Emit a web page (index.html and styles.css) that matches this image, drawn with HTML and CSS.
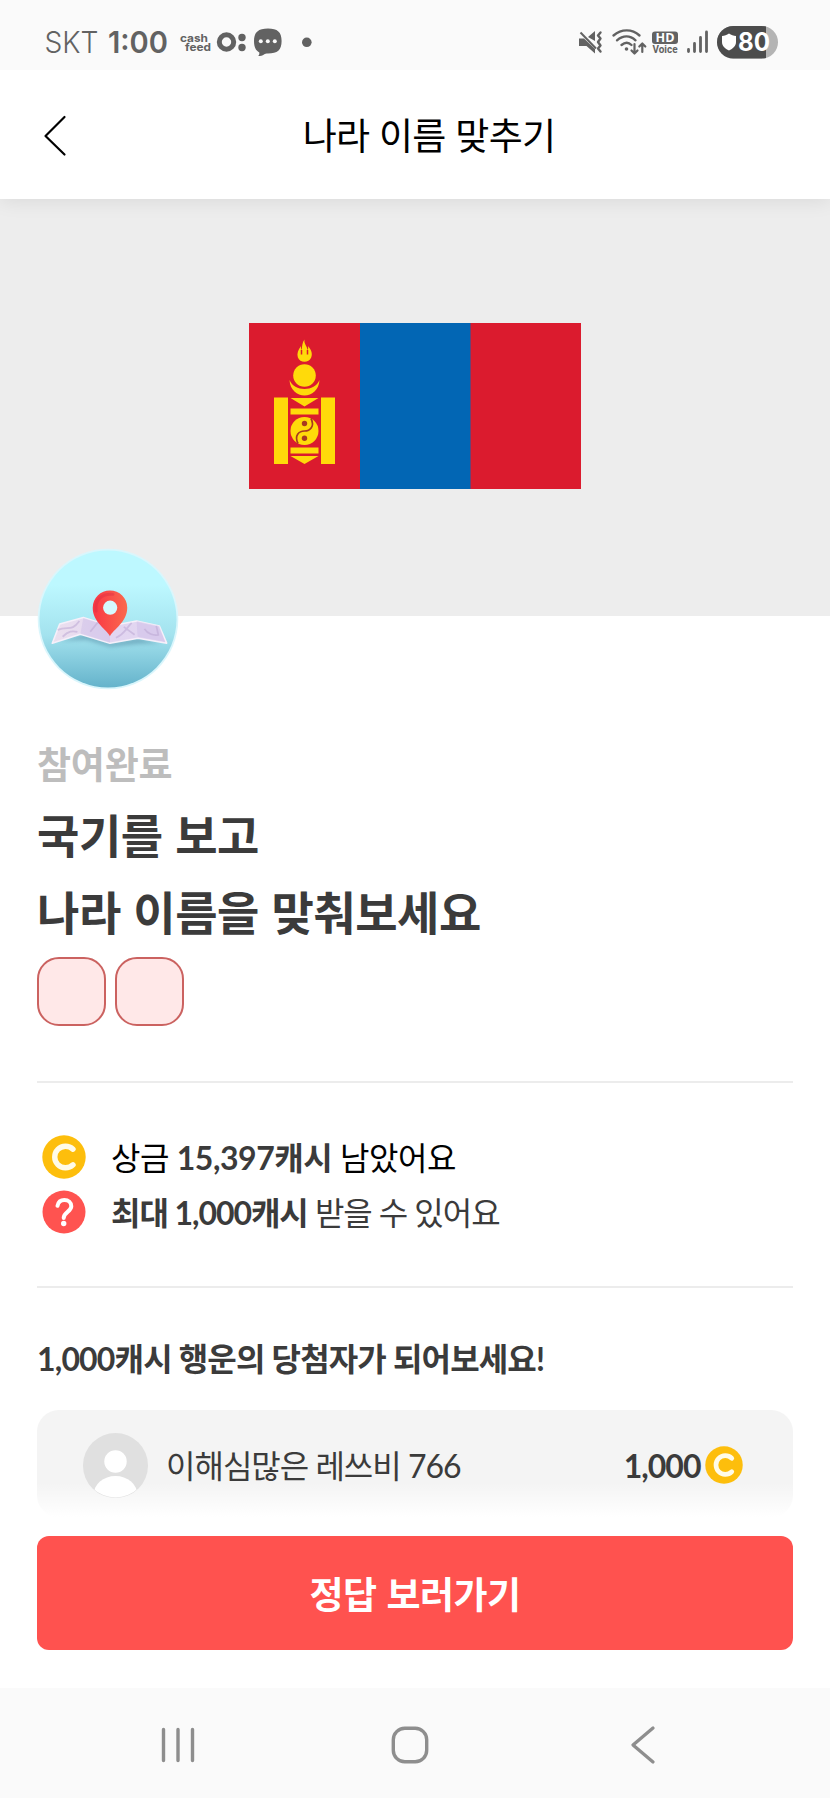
FILE: index.html
```html
<!DOCTYPE html>
<html lang="ko">
<head>
<meta charset="utf-8">
<title>나라 이름 맞추기</title>
<link rel="stylesheet" href="styles.css">
</head>
<body>
<svg class="defs" width="0" height="0" aria-hidden="true">
  <symbol id="coin" viewBox="0 0 44 44">
    <circle cx="22" cy="22" r="21.7" fill="#fdbe0c"/>
    <path d="M31 14.2A10.8 10.8 0 1 0 31 29.8" fill="none" stroke="#fffbe8" stroke-width="5.4" stroke-linecap="round"/>
  </symbol>
</svg>
<div class="phone">
  <div class="status">
    <svg class="status-left" width="290" height="44" viewBox="40 20 290 44">
      <g fill="#626262">
        <text class="carrier" x="44.5" y="52.5" textLength="54" lengthAdjust="spacingAndGlyphs">SKT</text>
        <text class="clock" x="108" y="52.5" textLength="60" lengthAdjust="spacingAndGlyphs">1:00</text>
        <text class="feed" x="180" y="41.5" textLength="28" lengthAdjust="spacingAndGlyphs">cash</text>
        <text class="feed" x="185" y="50.5" textLength="26" lengthAdjust="spacingAndGlyphs">feed</text>
        <circle cx="226.500" cy="42" r="7.200" fill="none" stroke="#626262" stroke-width="5"/>
        <circle cx="242" cy="37.500" r="3.700"/><circle cx="242" cy="47.500" r="3.700"/>
        <path d="M268 28.500c9.500 0 13.600 3.500 13.600 12.500S277.500 53.500 268 53.500c-2 0-3 .2-4 .9-1.500 1-3.500 1.700-5.800 1.700 1-1.200 1.300-2.300 1.100-3.700-3.800-2-5.300-5.600-5.300-11.400 0-9 4.500-12.500 14-12.500z"/>
        <circle cx="306.800" cy="42.300" r="4.800"/>
      </g>
      <g fill="#fafafa"><circle cx="260.800" cy="41.300" r="2"/><circle cx="267.800" cy="41.300" r="2"/><circle cx="274.800" cy="41.300" r="2"/></g>
    </svg>
    <svg class="status-right" width="210" height="44" viewBox="573 20 210 44">
      <g fill="#626262">
        <path d="M579 38.500h5l11 10.500v4.500L586.500 46H579z M588 37l7-6v10z"/>
        <path d="M580.500 32.500L596 48.500" stroke="#626262" stroke-width="2"/>
      </g>
      <g fill="none" stroke="#626262" stroke-width="2.400" stroke-linecap="round" stroke-linejoin="round">
        <path d="M600.500 32.500l-2.500 3 2.500 3-2.500 3.500 2.500 3.500-2.500 3 2.500 3"/>
        <path d="M613.500 35.500c8-6.800 18.500-6.800 26 0M617 40.300c6-5 13-5 18.500 0M621.500 45c3.500-3 7-3 10 0"/>
        <path d="M634.500 44v9M631.500 50.500l3 3 3-3M642.300 52v-8M639.300 46.500l3-3 3 3" stroke-width="2.200"/>
      </g>
      <circle cx="626.500" cy="49" r="1.800" fill="#626262"/>
      <rect x="652" y="31.500" width="26" height="12.500" rx="3" fill="#626262"/>
      <text class="hd" x="655.500" y="42" textLength="19" lengthAdjust="spacingAndGlyphs" fill="#fff">HD</text>
      <text class="voice" x="652.500" y="52.700" textLength="25" lengthAdjust="spacingAndGlyphs" fill="#626262">Voice</text>
      <path d="M688.500 49.500v2M694.500 43.500v8M700.500 37.500v14M706.500 32v19.500" stroke="#626262" stroke-width="2.800" stroke-linecap="round"/>
      <clipPath id="bat"><rect x="717" y="26" width="61" height="32.500" rx="16.250"/></clipPath>
      <g clip-path="url(#bat)"><path fill="#b4b4b4" d="M717 26h61v33h-61z"/><path fill="#4c4c4c" d="M717 26h49v33h-49z"/></g>
      <path d="M729 33.500c2.300 1.800 4.500 2.300 7 2.600v6c0 4-3 6.700-7 8.400-4-1.700-7-4.400-7-8.400v-6c2.500-.3 4.700-.8 7-2.600z" fill="#fff"/>
      <text class="level" x="738" y="51" textLength="32" lengthAdjust="spacingAndGlyphs" fill="#fff">80</text>
    </svg>
  </div>

  <header class="header">
    <svg class="back" width="26" height="44" viewBox="0 0 26 44"><path d="M22.500 4L3.500 23l19 18.500" fill="none" stroke="#000" stroke-width="2.200" stroke-linecap="round" stroke-linejoin="round"/></svg>
    <h1 class="title">나라 이름 맞추기</h1>
  </header>

  <div class="hero">
    <svg class="flag" width="332" height="166" viewBox="0 0 332 166">
      <path fill="#db1b2e" d="M0 0h332v166H0z"/><path fill="#0266b4" d="M111 0h110.500v166H111z"/>
      <g fill="#ffda0a">
        <path d="M55.500 16.500c-.8 4.500 2.500 6 3 10.500.8-1 .8-2.500.5-4 4 4.500 4.500 8.500 3.200 11.500-1.400 3-3.700 4.200-6.700 4.200s-5.500-1.500-6.700-4.500c-1-3.300.2-7.200 3.200-11.200-.2 1.500 0 3 .7 4 .5-4 .5-7.500 2.800-10.500z"/>
        <path d="M52.500 27v4.500M58.500 27v4.500" stroke="#db1b2e" stroke-width="1.500"/>
        <circle cx="55.500" cy="52.500" r="11.300"/>
        <path d="M40.500 57c1 20.500 29 20.500 30 0-4.700 12-25.300 12-30 0z"/>
        <path d="M25 74.500h14V141H25zM72 74.500h14V141H72zM41.500 75h28l-14 8.500zM41.500 85.500h28v6h-28zM41.500 124.500h28v6h-28zM41.500 133h28l-14 8z"/>
        <circle cx="55.500" cy="108" r="14"/>
      </g>
      <g fill="none" stroke="#a83a20" stroke-width="1.700"><path d="M62 95.500c4 8-1 12.500-6.500 12.500s-10.500 4.500-6.500 12.500"/></g>
      <g fill="#a83a20"><circle cx="55.500" cy="100.500" r="2.700"/><circle cx="55.500" cy="115.300" r="2.700"/></g>
    </svg>
    <svg class="badge" width="142" height="142" viewBox="0 0 144 144">
      <defs>
        <linearGradient id="sky" x2="0" y2="1"><stop offset=".25" stop-color="#bdf8ff"/><stop offset=".62" stop-color="#a3e2ee"/><stop offset="1" stop-color="#65b3cb"/></linearGradient>
        <linearGradient id="pin"><stop stop-color="#f93745"/><stop offset="1" stop-color="#fa694e"/></linearGradient>
        <linearGradient id="fold"><stop stop-color="#ece0ee"/><stop offset=".5" stop-color="#e2d6f1"/><stop offset="1" stop-color="#e2d5f0"/></linearGradient>
        <filter id="soft" x="-20%" y="-80%" width="140%" height="260%"><feGaussianBlur stdDeviation="2.200"/></filter>
      </defs>
      <circle cx="72" cy="72" r="71.300" fill="#daf6fc"/><circle cx="72" cy="72" r="69.500" fill="url(#sky)"/>
      <path d="M22 94l28-7 24 9 28-5 24 5-24 1-28 3-24-7z" fill="#4f86a0" opacity=".55" filter="url(#soft)"/>
      <path d="M15.500 96.500L23 77l24-6.500L74 79l27-5 23 5 7.500 17.500-29-5L74 96.500l-30-9z" fill="url(#fold)" stroke="#f6f0fa" stroke-width="1.600" stroke-linejoin="round"/>
      <path d="M47 71l27 8v17l-30-9zM101 74l23 5 6 16-28-5z" fill="#c8b8e4" opacity=".38"/>
      <path d="M21 83c11-4 14 2 22-9M26 90c6-6 10-6 15-5M54 85l8-10 12 6M80 91c8-3 10-9 16-15M88 80l11 8M109 82c3 5 9 7 14 6l-2-9" fill="none" stroke="#bba8d3" stroke-width="1.800" opacity=".55"/>
      <g transform="translate(0 1)">
        <path d="M74 88.500c-3-7-17.500-14-17.500-29a17.500 17.500 0 0 1 35 0C91.500 74.500 77 81.500 74 88.500z" fill="url(#pin)"/>
        <path d="M60 63c-2-12 7-18 17-17" fill="none" stroke="#d92c40" stroke-width="3" opacity=".4" stroke-linecap="round"/>
        <circle cx="74.200" cy="59.500" r="7.200" fill="#d5faff"/>
      </g>
    </svg>
  </div>

  <main class="content">
    <p class="state">참여완료</p>
    <h2 class="question">국기를 보고<br>나라 이름을 맞춰보세요</h2>
    <div class="boxes"><span class="box"></span><span class="box"></span></div>
    <div class="info">
      <div class="row"><svg class="row-icon"><use href="#coin"/></svg><p class="row-text first">상금 <b>15,397캐시</b> 남았어요</p></div>
      <div class="row"><svg class="row-icon" viewBox="0 0 44 44"><circle cx="22" cy="22" r="21.500" fill="#ff5350"/><path d="M15.500 15.800c.8-3.800 3.500-5.800 6.800-5.800 4 0 7 2.600 7 6.300 0 5.400-7.600 5.900-7.600 11.700" fill="none" stroke="#fff" stroke-width="4" stroke-linecap="round"/><circle cx="21.700" cy="33.500" r="2.700" fill="#fff"/></svg><p class="row-text second"><b>최대 1,000캐시</b> 받을 수 있어요</p></div>
    </div>
    <h3 class="lucky">1,000캐시 행운의 당첨자가 되어보세요!</h3>
    <div class="winner">
      <svg class="avatar" width="65" height="65" viewBox="0 0 65 65"><defs><clipPath id="face"><circle cx="32.500" cy="32.500" r="32"/></clipPath></defs><circle cx="32.500" cy="32.500" r="32.500" fill="#e0e0e0"/><g fill="#fff" clip-path="url(#face)"><circle cx="32.500" cy="28.500" r="11.200"/><ellipse cx="32.500" cy="62" rx="22" ry="19"/></g></svg>
      <span class="name">이해심많은 레쓰비 766</span>
      <span class="prize">1,000</span>
      <svg class="prize-icon"><use href="#coin"/></svg>
    </div>
    <button class="cta">정답 보러가기</button>
  </main>

  <nav class="nav">
    <svg width="34" height="40" viewBox="0 0 34 40"><path d="M2.500 4.500v31M17 4.500v31M31.500 4.500v31" stroke="#8e8e8e" stroke-width="3.400" stroke-linecap="round"/></svg>
    <svg width="40" height="40" viewBox="0 0 40 40"><rect x="3.300" y="3.300" width="33.400" height="33.400" rx="11.500" fill="none" stroke="#8e8e8e" stroke-width="3.400"/></svg>
    <svg width="26" height="40" viewBox="0 0 26 40"><path d="M23 3L3 20l20 17" fill="none" stroke="#8e8e8e" stroke-width="3.300" stroke-linecap="round" stroke-linejoin="round"/></svg>
  </nav>
</div>
</body>
</html>
```
FILE: styles.css
```css
* { box-sizing: border-box; margin: 0; padding: 0; }
body { background: #fff; font-family: Lato, "Noto Sans CJK KR", sans-serif; color: #3b3b3b; }
svg { display: block; flex: none; }
.defs { position: absolute; }
.phone { display: flex; flex-direction: column; width: 830px; height: 1798px; overflow: hidden; }

.status { position: relative; z-index: 2; display: flex; justify-content: space-between; height: 70px; padding: 20px 47px 0 40px; background: #fafafa; }
.carrier { font: 300 30px Inter, sans-serif; }
.clock { font: 600 30px Inter, sans-serif; }
.feed { font: 700 11px/9px Inter, sans-serif; }
.hd { font: 700 13px "Open Sans", sans-serif; }
.voice { font: 700 10.5px Roboto, sans-serif; }
.level { font: 700 25px Inter, sans-serif; }

.header { position: relative; z-index: 1; display: grid; grid-template-columns: 26px 1fr; align-items: center; height: 129px; padding: 0 0 0 42px; background: #fff; box-shadow: 0 3px 18px rgba(0, 0, 0, .08); }
.title { padding: 0 40px 2px 0; text-align: center; font: 400 37px/50px "Noto Sans CJK KR", sans-serif; letter-spacing: -.7px; color: #000; }

.hero { position: relative; display: flex; justify-content: center; height: 417px; padding-top: 124.4px; background: #ededed; }
.badge { position: absolute; left: 37px; top: 349px; }

.content { display: flex; flex-direction: column; height: 1072px; padding: 0 37px; }
.state { margin-top: 120px; font: 700 37px/54px "Noto Sans CJK KR", sans-serif; letter-spacing: -.2px; color: #bdbdbd; }
.question { margin-top: 4.5px; font: 700 46px/77.500px "Noto Sans CJK KR", sans-serif; letter-spacing: -.42px; }
.boxes { display: flex; gap: 9px; margin-top: 7px; }
.box { width: 69px; height: 69px; border: 2px solid #cb6260; border-radius: 22px; background: #ffe8e8; }
.info { display: flex; flex-direction: column; gap: 12px; height: 207px; margin-top: 55.5px; padding: 52px 5px 0; border-top: 2px solid #ececec; border-bottom: 2px solid #ececec; }
.row { display: flex; align-items: center; gap: 25px; height: 43.500px; }
.row-icon { width: 44px; height: 44px; }
.row-text { padding-top: 2px; font-size: 32px; line-height: 44px; white-space: nowrap; }
.row-text b { font-weight: 700; color: #3b3b3b; }
.first { letter-spacing: -.45px; color: #000; }
.second { letter-spacing: -1.05px; }
.lucky { margin-top: 48.500px; font-size: 32px; line-height: 44px; font-weight: 700; letter-spacing: -.83px; white-space: nowrap; }
.winner { display: flex; align-items: center; height: 107px; margin-top: 29.500px; padding: 0 50.5px 0 46px; border-radius: 22px; background: linear-gradient(rgba(255, 255, 255, 0) 68%, #fff) #f4f4f4; }
.avatar { margin-top: 3px; }
.name { margin-left: 18px; padding-top: 4px; font-size: 32px; line-height: 44px; letter-spacing: -1px; white-space: nowrap; }
.prize { margin-left: auto; padding-top: 4px; font-size: 32px; font-weight: 700; line-height: 44px; letter-spacing: -1px; }
.prize-icon { width: 38px; height: 38px; margin: 2px 0 0 4px; }
.cta { height: 114px; margin-top: 19px; padding-bottom: 1px; border: 0; border-radius: 12px; background: #ff524f; color: #fff; font: 700 37px/54px "Noto Sans CJK KR", sans-serif; letter-spacing: -.5px; }

.nav { display: flex; justify-content: space-between; align-items: center; height: 110px; padding: 4px 174px 0 161px; background: #fafafa; }
.nav svg:nth-child(2) { margin-right: 5px; }
```
